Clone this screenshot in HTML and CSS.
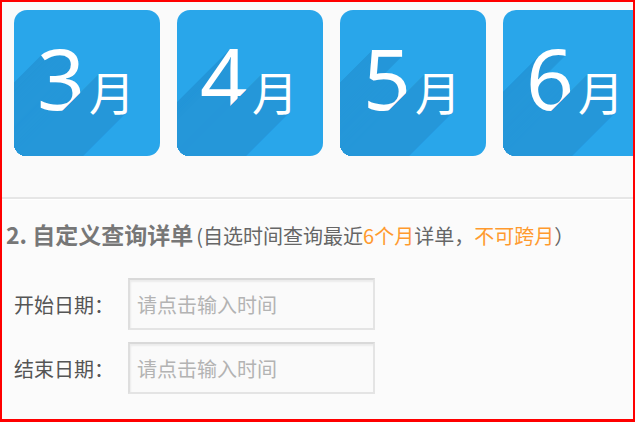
FILE: index.html
```html
<!DOCTYPE html>
<html lang="zh-CN">
<head>
    <meta charset="UTF-8">
    <meta name="viewport" content="width=device-width, initial-scale=1.0">
    <title>详单查询</title>
    <link rel="stylesheet" href="styles.css">
</head>
<body>
    <div class="frame">
        <div class="months">
            <a class="month"><span class="num">3<small>月</small></span></a>
            <a class="month"><span class="num">4<small>月</small></span></a>
            <a class="month"><span class="num">5<small>月</small></span></a>
            <a class="month"><span class="num">6<small>月</small></span></a>
        </div>

        <div class="divider"></div>

        <div class="custom">
            <h2 class="custom-title">2. 自定义查询详单<span class="note">(自选时间查询最近<em>6个月</em>详单，<em>不可跨月</em>）</span></h2>

            <div class="field">
                <label for="start-date">开始日期：</label>
                <input type="text" id="start-date" placeholder="请点击输入时间">
            </div>
            <div class="field">
                <label for="end-date">结束日期：</label>
                <input type="text" id="end-date" placeholder="请点击输入时间">
            </div>
        </div>
    </div>
</body>
</html>
```

FILE: styles.css
```css
* {
    margin: 0;
    padding: 0;
    box-sizing: border-box;
}

html, body {
    width: 635px;
    height: 422px;
    overflow: hidden;
}

body {
    font-family: "Noto Sans CJK SC", "Noto Sans", sans-serif;
    background: #fafafa;
}

.frame {
    height: 422px;
    border: 2px solid #ff0000;
    border-bottom-width: 3px;
    overflow: hidden;
}

/* month tiles */
.months {
    display: flex;
    gap: 17px;
    padding: 8px 0 0 12px;
    height: 195px;
}

.month {
    flex: 0 0 146px;
    height: 146px;
    border-radius: 13px;
    background: #29a6ea;
    overflow: hidden;
    display: flex;
    align-items: center;
    justify-content: center;
    color: #fff;
}

.num {
    font-family: "Noto Sans", sans-serif;
    font-size: 84px;
    line-height: 1;
    margin: -10px 0 0 -2px;
    text-shadow:
        -1px 1px #2597d9, -2px 2px #2597d9, -3px 3px #2597d9, -4px 4px #2597d9, -5px 5px #2597d9,
        -6px 6px #2597d9, -7px 7px #2597d9, -8px 8px #2597d9, -9px 9px #2597d9, -10px 10px #2597d9,
        -11px 11px #2597d9, -12px 12px #2597d9, -13px 13px #2597d9, -14px 14px #2597d9, -15px 15px #2597d9,
        -16px 16px #2597d9, -17px 17px #2597d9, -18px 18px #2597d9, -19px 19px #2597d9, -20px 20px #2597d9,
        -21px 21px #2597d9, -22px 22px #2597d9, -23px 23px #2597d9, -24px 24px #2597d9, -25px 25px #2597d9,
        -26px 26px #2597d9, -27px 27px #2597d9, -28px 28px #2597d9, -29px 29px #2597d9, -30px 30px #2597d9,
        -31px 31px #2597d9, -32px 32px #2597d9, -33px 33px #2597d9, -34px 34px #2597d9, -35px 35px #2597d9,
        -36px 36px #2597d9, -37px 37px #2597d9, -38px 38px #2597d9, -39px 39px #2597d9, -40px 40px #2597d9,
        -41px 41px #2597d9, -42px 42px #2597d9, -43px 43px #2597d9, -44px 44px #2597d9, -45px 45px #2597d9,
        -46px 46px #2597d9, -47px 47px #2597d9, -48px 48px #2597d9, -49px 49px #2597d9, -50px 50px #2597d9,
        -51px 51px #2597d9, -52px 52px #2597d9, -53px 53px #2597d9, -54px 54px #2597d9, -55px 55px #2597d9,
        -56px 56px #2597d9, -57px 57px #2597d9, -58px 58px #2597d9, -59px 59px #2597d9, -60px 60px #2597d9,
        -61px 61px #2597d9, -62px 62px #2597d9, -63px 63px #2597d9, -64px 64px #2597d9, -65px 65px #2597d9,
        -66px 66px #2597d9, -67px 67px #2597d9, -68px 68px #2597d9, -69px 69px #2597d9, -70px 70px #2597d9,
        -71px 71px #2597d9, -72px 72px #2597d9, -73px 73px #2597d9, -74px 74px #2597d9, -75px 75px #2597d9,
        -76px 76px #2597d9, -77px 77px #2597d9, -78px 78px #2597d9, -79px 79px #2597d9, -80px 80px #2597d9,
        -81px 81px #2597d9, -82px 82px #2597d9, -83px 83px #2597d9, -84px 84px #2597d9, -85px 85px #2597d9,
        -86px 86px #2597d9, -87px 87px #2597d9, -88px 88px #2597d9, -89px 89px #2597d9, -90px 90px #2597d9,
        -91px 91px #2597d9, -92px 92px #2597d9, -93px 93px #2597d9, -94px 94px #2597d9, -95px 95px #2597d9,
        -96px 96px #2597d9, -97px 97px #2597d9, -98px 98px #2597d9, -99px 99px #2597d9, -100px 100px #2597d9,
        -101px 101px #2597d9, -102px 102px #2597d9, -103px 103px #2597d9, -104px 104px #2597d9, -105px 105px #2597d9,
        -106px 106px #2597d9, -107px 107px #2597d9, -108px 108px #2597d9, -109px 109px #2597d9, -110px 110px #2597d9;
}

.num small {
    font-family: "Noto Sans CJK SC", sans-serif;
    font-size: 46px;
    margin-left: 4px;
}

.divider {
    height: 3px;
    border-top: 2px solid #e6e6e6;
    background: #fff;
}

/* custom query */
.custom {
    padding: 19px 0 0 4px;
    background: #fbfbfb;
    height: 220px;
}

.custom-title {
    font-size: 23px;
    font-weight: bold;
    color: #777;
    line-height: 30px;
    margin-bottom: 27px;
}

.note {
    font-size: 20px;
    font-weight: normal;
    color: #666;
    margin-left: 3px;
}

.note em {
    font-style: normal;
    color: #ff9a2e;
}

.field {
    display: flex;
    align-items: center;
    padding-left: 8px;
    margin-bottom: 12px;
}

.field label {
    width: 114px;
    font-size: 20px;
    color: #555;
}

.field input {
    width: 247px;
    height: 52px;
    border: 2px solid #e4e4e4;
    border-top-color: #d9d9d9;
    border-left-color: #dedede;
    box-shadow: inset 1px 2px 2px rgba(0, 0, 0, 0.06);
    background: #fafafa;
    padding: 0 7px;
    font-family: "Noto Sans CJK SC", sans-serif;
    font-size: 20px;
    color: #555;
    outline: none;
}

.field input::placeholder {
    color: #b3b3b3;
}
```
